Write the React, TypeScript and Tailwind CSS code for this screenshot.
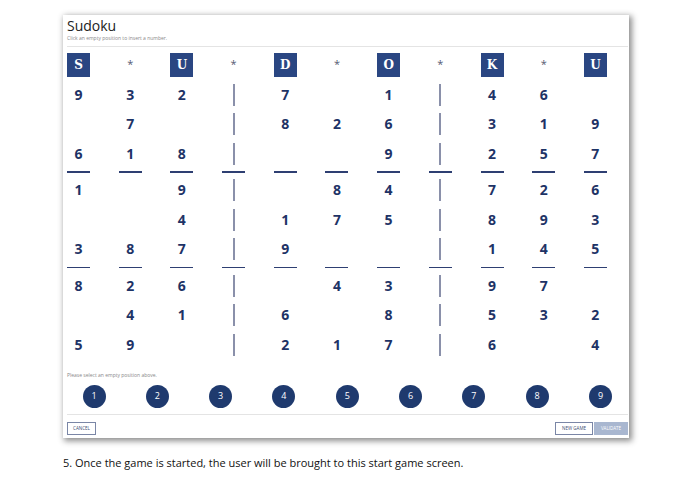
const header = ['S', '*', 'U', '*', 'D', '*', 'O', '*', 'K', '*', 'U'];

// 9x9 board, '' = empty
const board: string[][] = [
  ['9', '3', '2', '7', '', '1', '4', '6', ''],
  ['', '7', '', '8', '2', '6', '3', '1', '9'],
  ['6', '1', '8', '', '', '9', '2', '5', '7'],
  ['1', '', '9', '', '8', '4', '7', '2', '6'],
  ['', '', '4', '1', '7', '5', '8', '9', '3'],
  ['3', '8', '7', '9', '', '', '1', '4', '5'],
  ['8', '2', '6', '', '4', '3', '9', '7', ''],
  ['', '4', '1', '6', '', '8', '5', '3', '2'],
  ['5', '9', '', '2', '1', '7', '6', '', '4'],
];

const font = { fontFamily: '"Open Sans", "Noto Sans", sans-serif' };

function Row({ cells }: { cells: string[] }) {
  const items = [...cells.slice(0, 3), '|', ...cells.slice(3, 6), '|', ...cells.slice(6)];
  return (
    <div className="flex justify-between h-[29.5px] items-center">
      {items.map((c, i) =>
        c === '|' ? (
          <div key={i} className="w-[23px] flex justify-center">
            <div className="w-[2px] h-[22px] bg-[#8a90aa]" />
          </div>
        ) : (
          <div key={i} className="w-[23px] text-center text-[14px] font-bold text-[#1e3366] leading-none">
            {c}
          </div>
        )
      )}
    </div>
  );
}

function Rule() {
  return (
    <div className="flex justify-between h-[7px] items-center">
      {Array.from({ length: 11 }).map((_, i) => (
        <div key={i} className="w-[23px] h-[1.5px] bg-[#2e3f72]" />
      ))}
    </div>
  );
}

export default function App() {
  return (
    <div className="w-[695px] h-[494px] bg-white" style={font}>
      <div className="pt-[15px] pl-[63px]">
        <div className="w-[566px] h-[423px] bg-white shadow-[2px_2px_6px_1px_rgba(0,0,0,0.45)] pl-[4px] pr-[1px] flex flex-col">
          <div className="text-[14px] leading-none text-[#222] mt-[4px]">Sudoku</div>
          <div className="text-[5px] leading-none text-[#888] mt-[3px]">Click an empty position to insert a number.</div>
          <div className="h-px bg-[#e4e4e4] mt-[5px]" />

          <div className="w-[540px] mt-[6px]">
            <div className="flex justify-between items-center h-[24px]">
              {header.map((h, i) =>
                h === '*' ? (
                  <div key={i} className="w-[23px] text-center text-[11px] text-[#555a72] leading-none -mt-[4px]">*</div>
                ) : (
                  <div
                    key={i}
                    className="w-[23px] h-[24px] bg-[#2a4682] text-white text-[12px] font-bold flex items-center justify-center"
                    style={{ fontFamily: '"DejaVu Serif", "Liberation Serif", serif' }}
                  >
                    {h}
                  </div>
                )
              )}
            </div>
            <div className="mt-[3px]">
              <Row cells={board[0]} />
              <Row cells={board[1]} />
              <Row cells={board[2]} />
              <Rule />
              <Row cells={board[3]} />
              <Row cells={board[4]} />
              <Row cells={board[5]} />
              <Rule />
              <Row cells={board[6]} />
              <Row cells={board[7]} />
              <Row cells={board[8]} />
            </div>
          </div>

          <div className="text-[5px] leading-none text-[#888] mt-[13px]">Please select an empty position above.</div>
          <div className="flex justify-between pl-[15.5px] pr-[16px] mt-[7px]">
            {['1', '2', '3', '4', '5', '6', '7', '8', '9'].map((n) => (
              <div key={n} className="w-[23px] h-[23px] rounded-full bg-[#1f3a6e] text-white text-[9px] flex items-center justify-center">
                {n}
              </div>
            ))}
          </div>
          <div className="h-px bg-[#e4e4e4] mt-[6px]" />
          <div className="flex items-center mt-[7px]">
            <div className="w-[29px] h-[13px] border border-[#7a86a6] text-[4.5px] text-[#3a4a70] flex items-center justify-center">CANCEL</div>
            <div className="flex-1" />
            <div className="w-[38px] h-[13px] border border-[#7a86a6] text-[4.5px] text-[#3a4a70] flex items-center justify-center">NEW GAME</div>
            <div className="w-[34px] h-[13px] bg-[#a9b7d0] text-[4.5px] text-white flex items-center justify-center ml-[1px]">VALIDATE</div>
          </div>
        </div>
        <div className="text-[11px] text-[#111] mt-[19px] leading-none" style={{ fontFamily: '"Liberation Sans Narrow", "Open Sans", sans-serif' }}>
          5. Once the game is started, the user will be brought to this start game screen.
        </div>
      </div>
    </div>
  );
}
